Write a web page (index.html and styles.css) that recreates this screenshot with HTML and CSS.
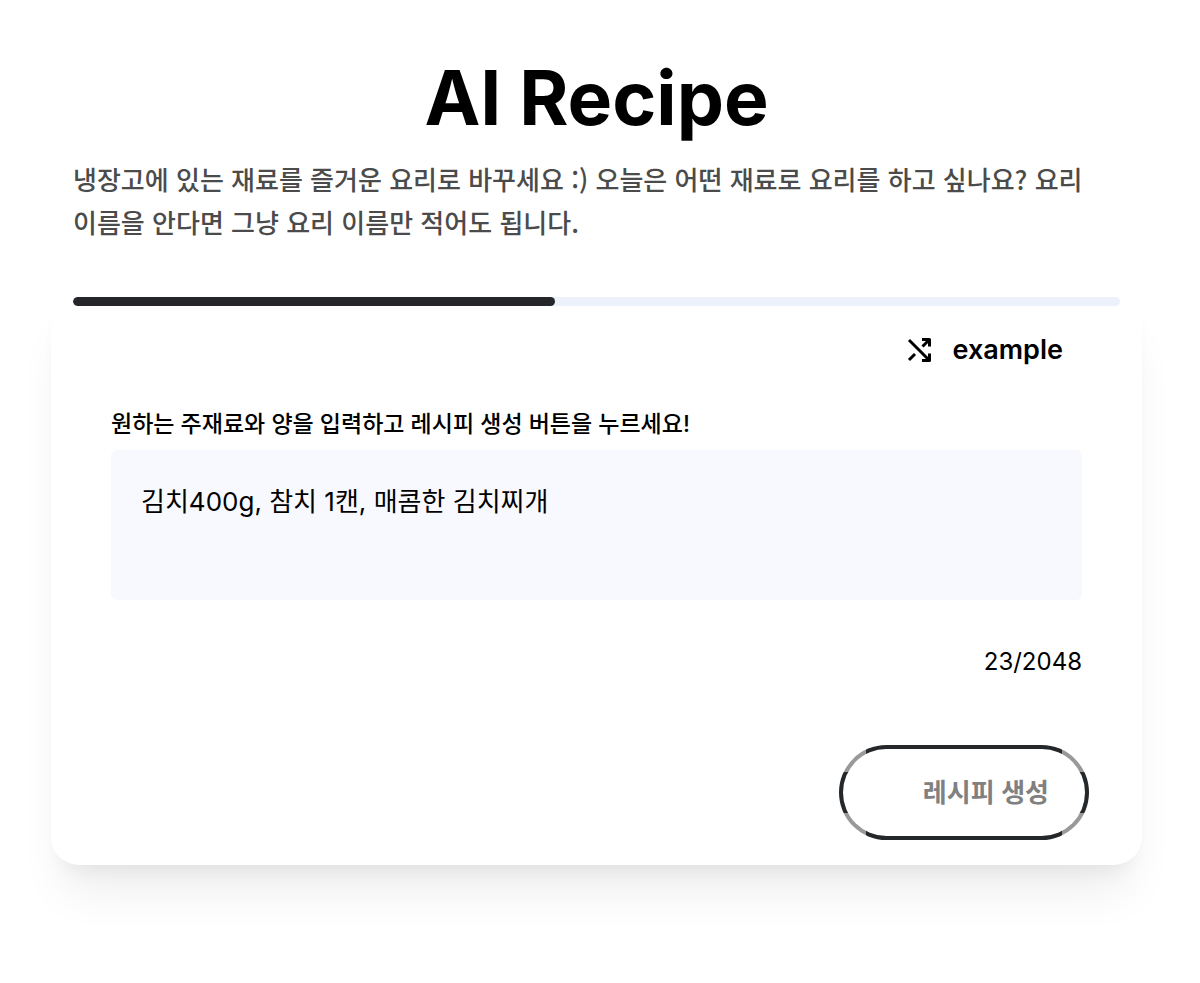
FILE: index.html
```html
<!DOCTYPE html>
<html lang="ko">
<head>
<meta charset="utf-8">
<title>AI Recipe</title>
<link rel="stylesheet" href="styles.css">
</head>
<body>
<main class="page">
  <header class="intro">
    <h1 class="title">AI Recipe</h1>
    <p class="lead">냉장고에 있는 재료를 즐거운 요리로 바꾸세요 :) 오늘은 어떤 재료로 요리를 하고 싶나요? 요리 이름을 안다면 그냥 요리 이름만 적어도 됩니다.</p>
  </header>
  <form class="card">
    <div class="progress"><div class="progress-bar"></div></div>
    <div class="card-body">
      <button type="button" class="example">
        <svg class="shuffle" viewBox="0 0 24 24" aria-hidden="true"><path d="M2 2 22 22M2 22 8 16M15.500 8.500 22 2M15 1.500H22.500V8.500M15 22.500H22.500V15.500"/></svg>
        <span>example</span>
      </button>
      <label class="label" for="ingredients">원하는 주재료와 양을 입력하고 레시피 생성 버튼을 누르세요!</label>
      <textarea class="input" id="ingredients" maxlength="2048" spellcheck="false">김치400g, 참치 1캔, 매콤한 김치찌개</textarea>
      <p class="count">23/2048</p>
    </div>
    <div class="actions"><button type="button" class="submit">레시피 생성</button></div>
  </form>
</main>
</body>
</html>
```
FILE: styles.css
```css
* { box-sizing: border-box; }
body {
  margin: 0;
  min-height: 100vh;
  background: #fff;
  color: #000;
  font-family: Inter, "Noto Sans CJK KR", sans-serif;
}
button, textarea { font: inherit; color: inherit; }
.page { min-height: 100vh; padding: 56px 58px 100px 51px; }
.intro { padding: 0 22px; }
.title { margin: 0; font-size: 75px; line-height: 84px; font-weight: 700; text-align: center; }
.lead {
  margin: 17px 0 0;
  font-family: "Noto Sans CJK KR", sans-serif;
  font-size: 26px;
  line-height: 43px;
  font-weight: 500;
  color: #4b4b4b;
  word-break: keep-all;
}
.card {
  margin-top: 44px;
  padding: 10px 22px 25px;
  border-radius: 28px;
  background: #fff;
  box-shadow: 0 38px 46px -12px rgba(0, 0, 0, 0.07), 0 15px 19px -10px rgba(0, 0, 0, 0.06);
}
.progress { height: 9px; border-radius: 5px; background: #ecf1fc; overflow: hidden; }
.progress-bar { width: 46%; height: 100%; border-radius: 5px; background: #252629; }
.card-body { display: flex; flex-direction: column; padding: 20px 38px 0; }
.example {
  align-self: flex-end;
  display: flex;
  align-items: center;
  gap: 22px;
  margin-right: 19px;
  padding: 0;
  border: 0;
  background: none;
  font-size: 27px;
  line-height: 48px;
  font-weight: 600;
}
.shuffle {
  width: 24px;
  height: 24px;
  fill: none;
  stroke: currentColor;
  stroke-width: 3;
  stroke-linejoin: round;
}
.label { margin-top: 33px; font-size: 23px; line-height: 34px; font-weight: 500; }
.input {
  height: 150px;
  margin-top: 9px;
  padding: 30px;
  border: 0;
  border-radius: 6px;
  background: #f8f9fe;
  font-size: 26px;
  line-height: 43px;
  resize: none;
}
.count { margin: 44px 0 0; font-size: 24px; line-height: 36px; text-align: right; }
.actions { display: flex; justify-content: flex-end; margin-top: 65px; padding-right: 31px; }
.submit {
  --corner: linear-gradient(#999, #999);
  padding: 0 36px 0 80px;
  border: 4px solid transparent;
  border-radius: 48px;
  background:
    linear-gradient(#fff, #fff) padding-box,
    var(--corner) left top / 27px 27px no-repeat border-box,
    var(--corner) right top / 27px 27px no-repeat border-box,
    var(--corner) left bottom / 27px 27px no-repeat border-box,
    var(--corner) right bottom / 27px 27px no-repeat border-box,
    linear-gradient(#24282a, #24282a) border-box;
  color: #808080;
  font-size: 26px;
  line-height: 87px;
  font-weight: 600;
}
```
